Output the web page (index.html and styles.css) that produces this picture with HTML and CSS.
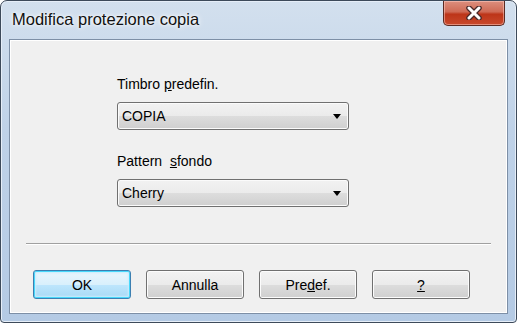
FILE: index.html
```html
<!DOCTYPE html>
<html lang="it">
<head>
  <meta charset="UTF-8">
  <title>Modifica protezione copia</title>
  <link rel="stylesheet" href="styles.css">
</head>
<body>
  <div class="window">
    <div class="titlebar">
      <span class="title">Modifica protezione copia</span>
      <div class="close-btn">
        <svg width="20" height="14" viewBox="0 0 20 14">
          <path d="M5 2 L15 12 M15 2 L5 12" stroke="#4a2a2a" stroke-width="5.5" stroke-linecap="round"/>
          <path d="M5 2 L15 12 M15 2 L5 12" stroke="#ffffff" stroke-width="3" stroke-linecap="round"/>
        </svg>
      </div>
    </div>

    <div class="client">
      <div class="fields">
        <label class="field-label">Timbro <u>p</u>redefin.</label>
        <div class="combo">
          <span>COPIA</span>
          <span class="arrow"></span>
        </div>

        <label class="field-label second">Pattern&nbsp; <u>s</u>fondo</label>
        <div class="combo">
          <span>Cherry</span>
          <span class="arrow"></span>
        </div>
      </div>

      <div class="separator"></div>

      <div class="buttons">
        <button class="btn default">OK</button>
        <button class="btn">Annulla</button>
        <button class="btn">Pre<u>d</u>ef.</button>
        <button class="btn"><u>?</u></button>
      </div>
    </div>
  </div>
</body>
</html>
```

FILE: styles.css
```css
body {
  margin: 0;
  background: #ffffff;
  font-family: "Liberation Sans", Arial, sans-serif;
}

.window {
  width: 515px;
  height: 321px;
  border: 1px solid #3d4a5a;
  border-radius: 7px 7px 4px 4px;
  background: linear-gradient(to bottom, #d3e0ee 0%, #bfd2e8 40%, #b4cae4 100%);
  display: flex;
  flex-direction: column;
  box-shadow: inset 0 0 0 1px #e6eef8;
}

.titlebar {
  height: 38px;
  display: flex;
  justify-content: space-between;
  align-items: flex-start;
  flex-shrink: 0;
}

.title {
  font-size: 16.5px;
  color: #111;
  margin: 9px 0 0 11px;
  text-shadow: 0 0 6px #ffffff, 0 0 3px #ffffff;
}

.close-btn {
  width: 60px;
  height: 24px;
  margin-right: 11px;
  border: 1px solid #5c2a22;
  border-top: none;
  border-radius: 0 0 5px 5px;
  background: linear-gradient(to bottom, #dc8f7e 0%, #cf6a55 45%, #bd3519 55%, #c8492c 100%);
  box-shadow: inset 0 0 0 1px rgba(255, 210, 200, 0.5);
  display: flex;
  align-items: center;
  justify-content: center;
}

.client {
  margin: 0 8px 8px 8px;
  flex: 1;
  background: #f0f0f0;
  border: 1px solid #7d8fa6;
  box-shadow: inset 0 0 0 1px #ffffff;
  display: flex;
  flex-direction: column;
}

.fields {
  padding: 36px 0 0 107px;
  display: flex;
  flex-direction: column;
  align-items: flex-start;
}

.field-label {
  font-size: 14px;
  line-height: 16px;
  color: #000;
  margin-bottom: 10px;
}

.field-label.second {
  margin-top: 23px;
}

.combo {
  width: 220px;
  height: 26px;
  border: 1px solid #707070;
  border-radius: 3px;
  background: linear-gradient(to bottom, #f2f2f2 0%, #ebebeb 50%, #dddddd 51%, #cfcfcf 100%);
  box-shadow: inset 0 0 0 1px #fbfbfb;
  display: flex;
  align-items: center;
  justify-content: space-between;
  padding: 0 6px 0 4px;
  font-size: 14px;
  color: #000;
}

.combo .arrow {
  width: 0;
  height: 0;
  border-left: 4px solid transparent;
  border-right: 4px solid transparent;
  border-top: 5px solid #000;
  margin-right: 1px;
}

.separator {
  height: 1px;
  background: #a0a0a0;
  border-bottom: 1px solid #ffffff;
  margin: 36px 16px 0 16px;
}

.buttons {
  display: flex;
  gap: 15px;
  padding: 25px 0 0 23px;
}

.btn {
  width: 98px;
  height: 29px;
  font-family: "Liberation Sans", Arial, sans-serif;
  font-size: 14px;
  color: #000;
  border: 1px solid #707070;
  border-radius: 3px;
  background: linear-gradient(to bottom, #f2f2f2 0%, #ebebeb 50%, #dddddd 51%, #cfcfcf 100%);
  box-shadow: inset 0 0 0 1px #fcfcfc;
  padding: 0;
}

.btn.default {
  border-color: #3c7fb1;
  background: linear-gradient(to bottom, #eaf6fd 0%, #d9f0fc 50%, #bee6fd 51%, #a7d9f5 100%);
  box-shadow: inset 0 0 0 1px #48d8fb, inset 0 0 2px 2px #c9ecfc;
}
```
